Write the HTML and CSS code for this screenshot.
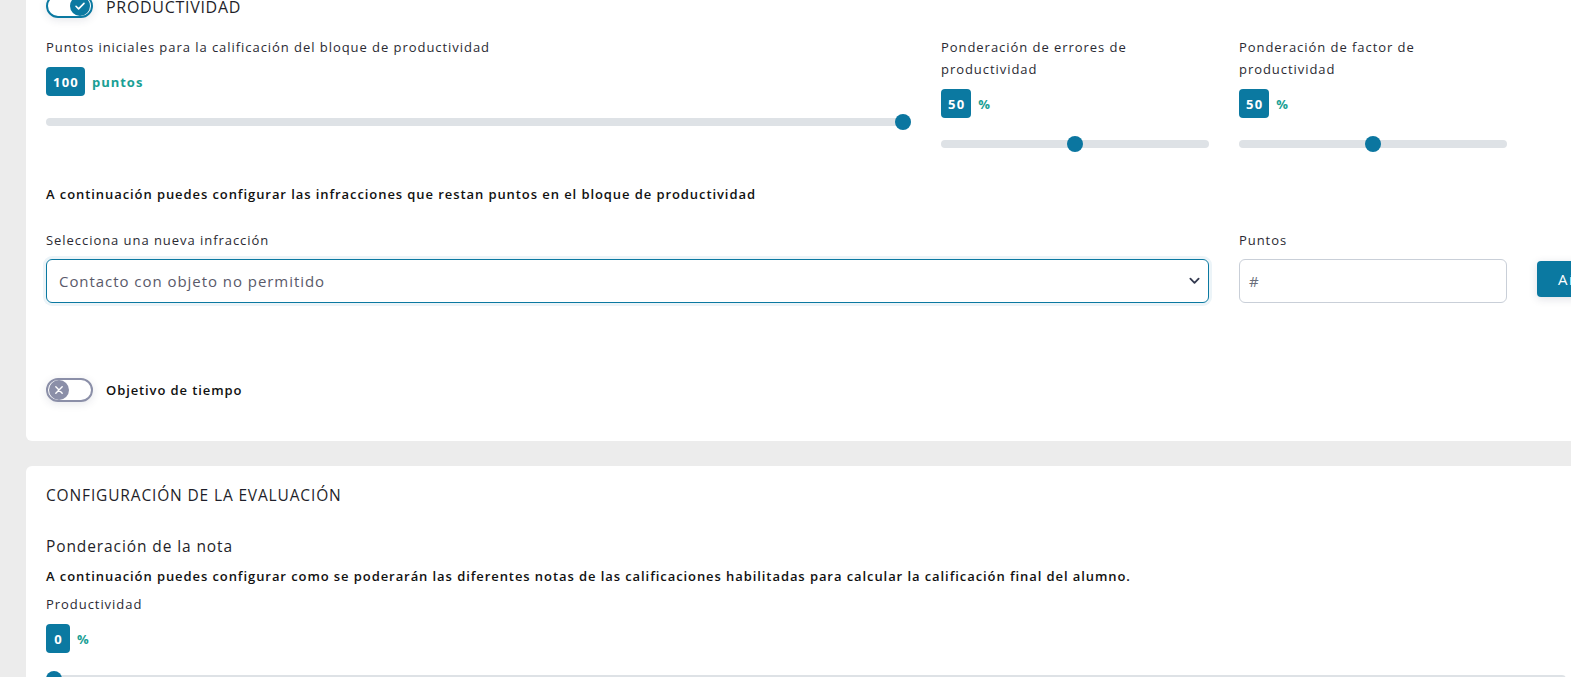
FILE: index.html
```html
<!DOCTYPE html>
<html lang="es">
<head>
<meta charset="utf-8">
<title>Configuración</title>
<link rel="stylesheet" href="styles.css">
</head>
<body>
<main class="page">
  <section class="card card-prod">
    <div class="block-head">
      <span class="switch switch-on">
        <span class="knob"><svg viewBox="0 0 20 20" width="20" height="20"><path d="M6 10.3l2.6 2.6L14 7.4" fill="none" stroke="#fff" stroke-width="1.6" stroke-linecap="round" stroke-linejoin="round"/></svg></span>
      </span>
      <h2 class="block-title">PRODUCTIVIDAD</h2>
    </div>

    <div class="weights">
      <div class="field">
        <label class="label">Puntos iniciales para la calificación del bloque de productividad</label>
        <div class="value-row"><span class="badge">100</span><span class="unit">puntos</span></div>
        <div class="slider"><div class="track"></div><span class="thumb" style="left: calc(100% - 8px)"></span></div>
      </div>
      <div class="field">
        <label class="label">Ponderación de errores de<br>productividad</label>
        <div class="value-row"><span class="badge">50</span><span class="unit">%</span></div>
        <div class="slider"><div class="track"></div><span class="thumb" style="left: 50%"></span></div>
      </div>
      <div class="field">
        <label class="label">Ponderación de factor de<br>productividad</label>
        <div class="value-row"><span class="badge">50</span><span class="unit">%</span></div>
        <div class="slider"><div class="track"></div><span class="thumb" style="left: 50%"></span></div>
      </div>
    </div>

    <p class="note">A continuación puedes configurar las infracciones que restan puntos en el bloque de productividad</p>

    <div class="infraction-form">
      <div class="form-col form-col-wide">
        <label class="label">Selecciona una nueva infracción</label>
        <div class="select">
          <span>Contacto con objeto no permitido</span>
          <svg class="chevron" viewBox="0 0 12 8" width="11" height="8"><path d="M1.5 1.5L6 6l4.5-4.5" fill="none" stroke="#343a50" stroke-width="2" stroke-linecap="round" stroke-linejoin="round"/></svg>
        </div>
      </div>
      <div class="form-col">
        <label class="label">Puntos</label>
        <div class="input"><span class="placeholder">#</span></div>
      </div>
      <div class="form-col form-col-btn">
        <button class="btn">Añadir</button>
      </div>
    </div>

    <div class="toggle-row">
      <span class="switch switch-off">
        <span class="knob"><svg viewBox="0 0 20 20" width="20" height="20"><path d="M6.8 6.8l6.4 6.4M13.2 6.8l-6.4 6.4" fill="none" stroke="#fff" stroke-width="1.4" stroke-linecap="round"/></svg></span>
      </span>
      <span class="toggle-label">Objetivo de tiempo</span>
    </div>
  </section>

  <section class="card card-eval">
    <h2 class="card-title">CONFIGURACIÓN DE LA EVALUACIÓN</h2>
    <h3 class="sub-title">Ponderación de la nota</h3>
    <p class="note note-tight">A continuación puedes configurar como se poderarán las diferentes notas de las calificaciones habilitadas para calcular la calificación final del alumno.</p>
    <div class="field field-eval">
      <label class="label">Productividad</label>
      <div class="value-row"><span class="badge">0</span><span class="unit">%</span></div>
      <div class="slider"><div class="track"></div><span class="thumb" style="left: 8px"></span></div>
    </div>
  </section>
</main>
</body>
</html>
```

FILE: styles.css
```css
* { box-sizing: border-box; }

html, body {
  margin: 0;
  padding: 0;
  height: 100%;
  overflow: hidden;
}

body {
  background: #ececec;
  font-family: "Open Sans", "Noto Sans", sans-serif;
  color: #2a2a33;
}

.page {
  padding-left: 26px;
  width: 1900px;
}

.card {
  background: #fff;
  border-radius: 6px;
  padding: 0 20px;
}

.card-prod {
  margin-top: -20px;
  padding-top: 14px;
  padding-bottom: 39px;
}

.block-head {
  display: flex;
  align-items: center;
  gap: 13px;
  height: 24px;
}

.block-title {
  margin: 2px 0 0;
  font-size: 16px;
  font-weight: 400;
  letter-spacing: 0.7px;
  color: #1f1f2a;
  line-height: 18px;
}

.switch {
  position: relative;
  display: inline-flex;
  align-items: center;
  width: 47px;
  height: 24px;
  border-radius: 12px;
  border: 2px solid;
  box-shadow: 0 2px 8px rgba(40, 50, 80, 0.12);
  flex: none;
}

.switch-on {
  border-color: #0b79a1;
  justify-content: flex-end;
  padding-right: 1px;
}

.switch-off {
  border-color: #8b8fa8;
  justify-content: flex-start;
  padding-left: 1px;
}

.knob {
  width: 20px;
  height: 20px;
  border-radius: 50%;
  display: flex;
  align-items: center;
  justify-content: center;
}

.switch-on .knob { background: #0b79a1; }
.switch-off .knob { background: #8b8fa8; }

.weights {
  display: grid;
  grid-template-columns: 865px 268px 268px;
  column-gap: 30px;
  margin-top: 18px;
  align-items: start;
}

.label {
  display: block;
  font-size: 13px;
  line-height: 22px;
  letter-spacing: 0.95px;
  color: #2a2a33;
}

.value-row {
  display: flex;
  align-items: center;
  gap: 7px;
  margin-top: 9px;
}

.badge {
  display: inline-flex;
  align-items: center;
  justify-content: center;
  height: 29px;
  padding: 0 6px 0 7px;
  min-width: 24px;
  border-radius: 4px;
  background: #0b79a1;
  color: #fff;
  font-size: 13px;
  font-weight: 700;
  letter-spacing: 1.2px;
}

.unit {
  color: #1a9f95;
  font-size: 13px;
  font-weight: 700;
  letter-spacing: 1px;
}

.slider {
  position: relative;
  height: 16px;
  margin-top: 18px;
  display: flex;
  align-items: center;
}

.track {
  width: 100%;
  height: 8px;
  border-radius: 4px;
  background: #dee2e6;
}

.thumb {
  position: absolute;
  top: 0;
  width: 16px;
  height: 16px;
  margin-left: -8px;
  border-radius: 50%;
  background: #0b76a0;
}

.note {
  margin: 32px 0 0;
  font-size: 13px;
  line-height: 20px;
  font-weight: 600;
  letter-spacing: 0.92px;
  color: #111;
}

.infraction-form {
  display: grid;
  grid-template-columns: 1163px 268px 268px;
  column-gap: 30px;
  margin-top: 25px;
}

.form-col .label { margin-bottom: 8px; }

.form-col-btn {
  padding-top: 32px;
}

.select {
  display: flex;
  align-items: center;
  justify-content: space-between;
  height: 44px;
  padding: 0 8px 0 12px;
  border: 1px solid #0b79a1;
  border-radius: 6px;
  box-shadow: 0 0 0 3px rgba(11, 121, 161, 0.08);
  font-size: 15px;
  letter-spacing: 0.95px;
  color: #5a5a6a;
}

.input {
  display: flex;
  align-items: center;
  height: 44px;
  padding: 0 9px;
  border: 1px solid #c9cfd8;
  border-radius: 6px;
}

.placeholder {
  font-size: 15px;
  color: #6a6e7a;
}

.btn {
  height: 36px;
  padding: 0 20px 0 21px;
  border: none;
  border-radius: 4px;
  background: #0b79a1;
  color: #fff;
  font-family: inherit;
  font-size: 15px;
  letter-spacing: 1.5px;
  box-shadow: 0 2px 8px rgba(40, 50, 80, 0.15);
}

.toggle-row {
  display: flex;
  align-items: center;
  gap: 13px;
  margin-top: 75px;
}

.toggle-label {
  font-size: 13px;
  font-weight: 600;
  letter-spacing: 0.9px;
  color: #111;
}

.card-eval {
  margin-top: 25px;
  padding-top: 18px;
  padding-bottom: 40px;
}

.card-title {
  margin: 0;
  font-size: 15.5px;
  line-height: 22px;
  font-weight: 400;
  letter-spacing: 0.85px;
  color: #1f1f2a;
}

.sub-title {
  margin: 29px 0 0;
  font-size: 15.5px;
  line-height: 22px;
  font-weight: 400;
  letter-spacing: 0.9px;
  color: #1f1f2a;
}

.note-tight {
  margin-top: 9px;
}

.field-eval {
  margin-top: 7px;
  width: 1520px;
}
```
